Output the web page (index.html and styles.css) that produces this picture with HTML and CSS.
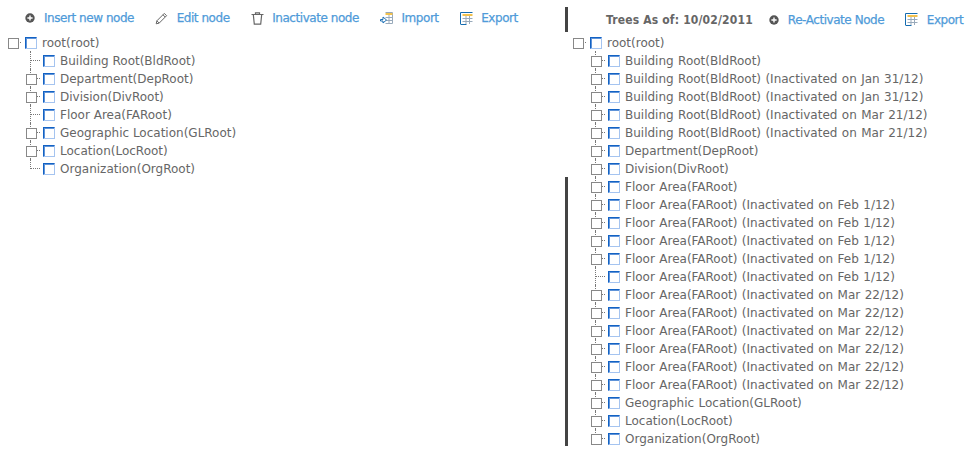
FILE: index.html
```html
<!DOCTYPE html>
<html lang="en">
<head>
<meta charset="utf-8">
<title>Trees</title>
<link rel="stylesheet" href="styles.css">
</head>
<body>
<svg class="defs" width="0" height="0" aria-hidden="true">
  <symbol id="i-plus" viewBox="0 0 10 10"><circle cx="5" cy="5" r="4.7" fill="#555"/><path d="M5 2.4v5.2M2.4 5h5.2" stroke="#fff" stroke-width="1.4"/></symbol>
  <symbol id="i-pencil" viewBox="0 0 13 13"><path d="M1.2 11.8l.7-3L9.3 1.4l2.3 2.3-7.4 7.4zM8 2.8l2.2 2.2M1.9 8.8l2.3 2.3" fill="none" stroke="#666" stroke-width="1"/></symbol>
  <symbol id="i-trash" viewBox="0 0 13 13"><path d="M.5 2.5h12M4.5 2.5V.8h4v1.7M2.3 2.5l1 9.7h6.4l1-9.7" fill="none" stroke="#666" stroke-width="1.2"/></symbol>
  <symbol id="i-import" viewBox="0 0 13 13"><path d="M5.5.5h7v11h-7" fill="none" stroke="#9ab"/><path d="M5.5 1h7v2h-7z" fill="#f1c14e"/><path d="M5.5 5.5h7M5.5 8.5h7M9 3v8" stroke="#9ab"/><path d="M.5 7.5h2.5V5l3.5 3L3 11V9H.5z" fill="#fff" stroke="#1a6fb5"/></symbol>
  <symbol id="i-export" viewBox="0 0 13 13"><path d="M.5 12V.5h12" fill="none" stroke="#156cb0"/><path d="M.5 12.5h6" stroke="#156cb0"/><path d="M2.5 2h10v2h-10z" fill="#f1c14e"/><path d="M2.5 6.5h10M2.5 9.5h10M6 4v8M9.5 4v8" stroke="#9ab"/></symbol>
</svg>
<main class="page">
  <section class="panel">
    <nav class="toolbar">
      <a class="tool tool-add"><svg class="icon-s"><use href="#i-plus"/></svg>Insert new node</a>
      <a class="tool"><svg class="icon"><use href="#i-pencil"/></svg>Edit node</a>
      <a class="tool"><svg class="icon"><use href="#i-trash"/></svg>Inactivate node</a>
      <a class="tool"><svg class="icon"><use href="#i-import"/></svg>Import</a>
      <a class="tool"><svg class="icon"><use href="#i-export"/></svg>Export</a>
    </nav>
    <ul class="tree">
      <li class="node root"><i class="twist"></i><i class="check"></i>root(root)</li>
      <li class="node leaf"><i class="twist"></i><i class="check"></i>Building Root(BldRoot)</li>
      <li class="node"><i class="twist"></i><i class="check"></i>Department(DepRoot)</li>
      <li class="node"><i class="twist"></i><i class="check"></i>Division(DivRoot)</li>
      <li class="node leaf"><i class="twist"></i><i class="check"></i>Floor Area(FARoot)</li>
      <li class="node"><i class="twist"></i><i class="check"></i>Geographic Location(GLRoot)</li>
      <li class="node"><i class="twist"></i><i class="check"></i>Location(LocRoot)</li>
      <li class="node leaf last"><i class="twist"></i><i class="check"></i>Organization(OrgRoot)</li>
    </ul>
  </section>
  <section class="panel panel-history">
    <nav class="toolbar toolbar-history">
      <strong class="as-of">Trees As of: 10/02/2011</strong>
      <a class="tool tool-add"><svg class="icon-s"><use href="#i-plus"/></svg>Re-Activate Node</a>
      <a class="tool"><svg class="icon"><use href="#i-export"/></svg>Export</a>
    </nav>
    <ul class="tree tree-history">
      <li class="node root"><i class="twist"></i><i class="check"></i>root(root)</li>
      <li class="node"><i class="twist"></i><i class="check"></i>Building Root(BldRoot)</li>
      <li class="node"><i class="twist"></i><i class="check"></i>Building Root(BldRoot) (Inactivated on Jan 31/12)</li>
      <li class="node"><i class="twist"></i><i class="check"></i>Building Root(BldRoot) (Inactivated on Jan 31/12)</li>
      <li class="node"><i class="twist"></i><i class="check"></i>Building Root(BldRoot) (Inactivated on Mar 21/12)</li>
      <li class="node"><i class="twist"></i><i class="check"></i>Building Root(BldRoot) (Inactivated on Mar 21/12)</li>
      <li class="node"><i class="twist"></i><i class="check"></i>Department(DepRoot)</li>
      <li class="node"><i class="twist"></i><i class="check"></i>Division(DivRoot)</li>
      <li class="node"><i class="twist"></i><i class="check"></i>Floor Area(FARoot)</li>
      <li class="node"><i class="twist"></i><i class="check"></i>Floor Area(FARoot) (Inactivated on Feb 1/12)</li>
      <li class="node"><i class="twist"></i><i class="check"></i>Floor Area(FARoot) (Inactivated on Feb 1/12)</li>
      <li class="node"><i class="twist"></i><i class="check"></i>Floor Area(FARoot) (Inactivated on Feb 1/12)</li>
      <li class="node"><i class="twist"></i><i class="check"></i>Floor Area(FARoot) (Inactivated on Feb 1/12)</li>
      <li class="node leaf"><i class="twist"></i><i class="check"></i>Floor Area(FARoot) (Inactivated on Feb 1/12)</li>
      <li class="node"><i class="twist"></i><i class="check"></i>Floor Area(FARoot) (Inactivated on Mar 22/12)</li>
      <li class="node"><i class="twist"></i><i class="check"></i>Floor Area(FARoot) (Inactivated on Mar 22/12)</li>
      <li class="node"><i class="twist"></i><i class="check"></i>Floor Area(FARoot) (Inactivated on Mar 22/12)</li>
      <li class="node"><i class="twist"></i><i class="check"></i>Floor Area(FARoot) (Inactivated on Mar 22/12)</li>
      <li class="node"><i class="twist"></i><i class="check"></i>Floor Area(FARoot) (Inactivated on Mar 22/12)</li>
      <li class="node"><i class="twist"></i><i class="check"></i>Floor Area(FARoot) (Inactivated on Mar 22/12)</li>
      <li class="node"><i class="twist"></i><i class="check"></i>Geographic Location(GLRoot)</li>
      <li class="node"><i class="twist"></i><i class="check"></i>Location(LocRoot)</li>
      <li class="node last"><i class="twist"></i><i class="check"></i>Organization(OrgRoot)</li>
    </ul>
  </section>
</main>
</body>
</html>
```
FILE: styles.css
```css
* { box-sizing: border-box; }
html, body { margin: 0; background: #fff; }
body {
  width: 966px;
  height: 453px;
  overflow: hidden;
  font: 12px/18px "DejaVu Sans", Verdana, sans-serif;
  color: #666;
}
.defs { position: absolute; }
.page { display: flex; }
.panel { width: 565px; flex: none; }
.panel-history { width: 401px; position: relative; }
.panel-history::after {
  content: "";
  position: absolute;
  left: 0;
  top: 177px;
  height: 269px;
  width: 3px;
  background: #444;
}
.toolbar {
  height: 34px;
  display: flex;
  align-items: center;
  gap: 21px;
  padding: 2px 0 0 25px;
}
.toolbar-history {
  height: 25px;
  margin: 7px 0 2px;
  padding: 0 0 0 38px;
  border-left: 3px solid #444;
}
.as-of {
  color: #666;
  font-weight: bold;
  font-stretch: condensed;
  letter-spacing: 0.17px;
  white-space: nowrap;
  margin-right: -5px;
}
.tool {
  display: flex;
  align-items: center;
  gap: 8.6px;
  color: #4f9bd9;
  letter-spacing: -0.45px;
  -webkit-text-stroke: 0.25px #4f9bd9;
  white-space: nowrap;
}
.tool-add { gap: 9px; }
.icon { width: 13px; height: 13px; flex: none; }
.icon-s { width: 10px; height: 10px; flex: none; }
.tree { list-style: none; margin: 0; padding: 0 0 0 8px; }
.tree-history { word-spacing: 0.6px; }
.node {
  display: flex;
  align-items: center;
  height: 18px;
  padding-left: 18px;
  white-space: nowrap;
}
.node.root { padding-left: 0; }
.twist {
  position: relative;
  flex: none;
  width: 17px;
  height: 18px;
}
.twist::before {
  content: "";
  position: absolute;
  left: 0;
  top: 4px;
  width: 9px;
  height: 9px;
  border: 1px solid #888;
  background: #fff;
  z-index: 1;
}
.twist::after {
  content: "";
  position: absolute;
  left: 4px;
  top: -1px;
  width: 9px;
  height: 18px;
  border-left: 1px dotted #777;
  background: linear-gradient(90deg, #777 50%, transparent 50%) 6px 9px / 2px 1px repeat-x;
}
.root .twist::after { border-left: 0; }
.leaf .twist::before { display: none; }
.last .twist::after { height: 10px; }
.leaf .twist::after { background-position: 0 9px; }
.check {
  flex: none;
  width: 12px;
  height: 12px;
  margin-right: 5px;
  border: 1px solid #a5c4f0;
  border-top-color: #1262c4;
  border-left-color: #1262c4;
  box-shadow: inset 1px 1px 0 #5f93d8;
}
```
